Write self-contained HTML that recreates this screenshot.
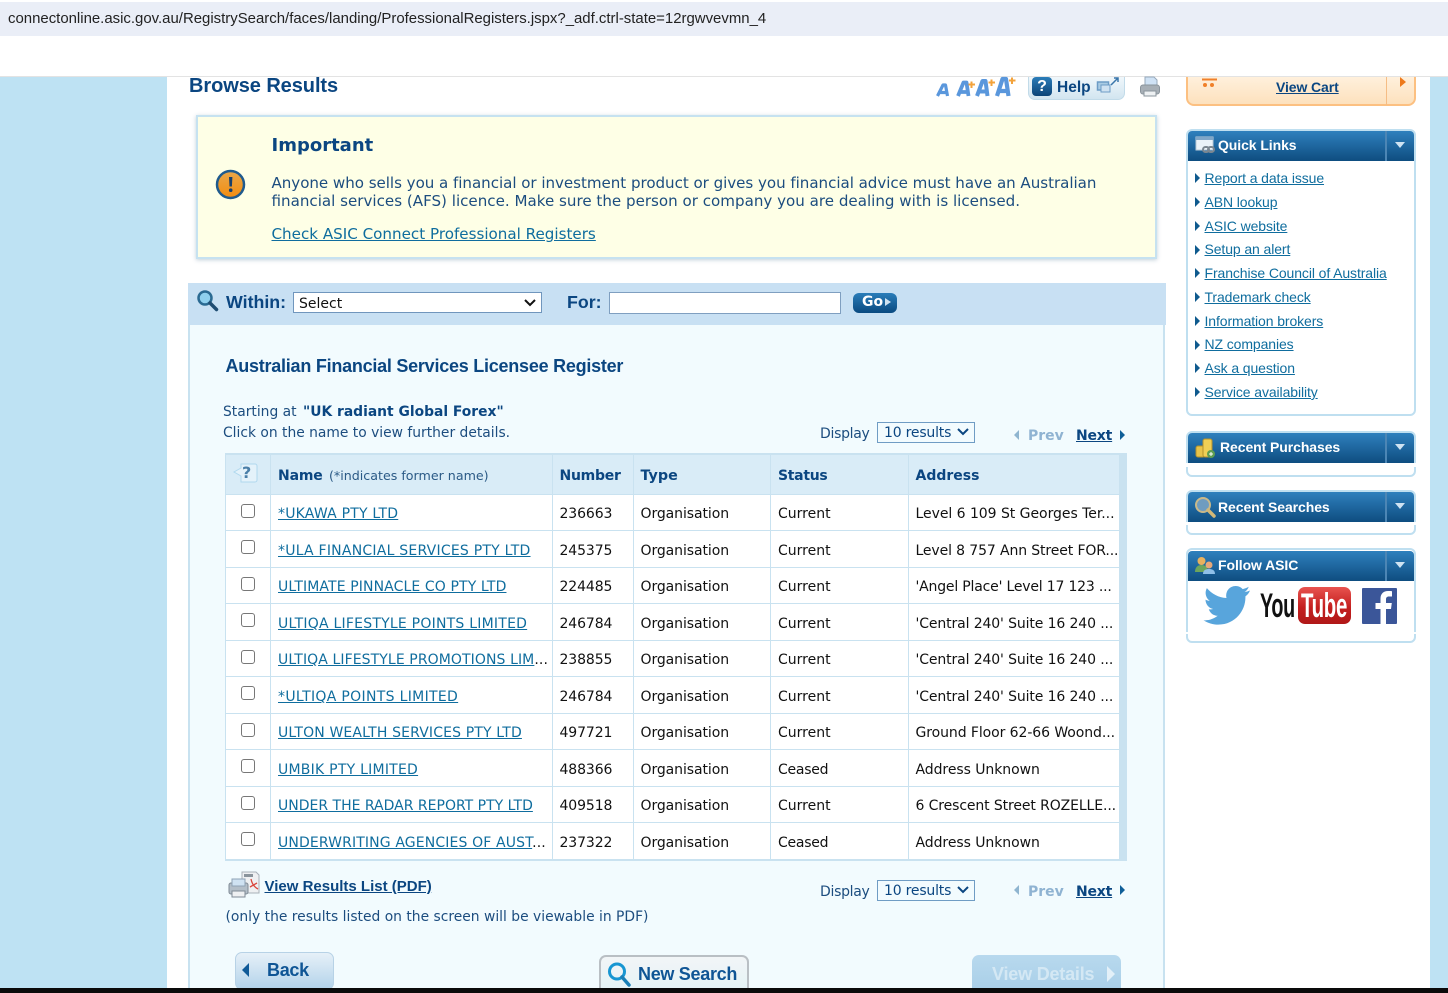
<!DOCTYPE html>
<html lang="en"><head><meta charset="utf-8"><title>Browse Results</title>
<style>
html,body{margin:0;padding:0;width:1448px;height:993px;overflow:hidden;background:#fff}
body{position:relative;font-family:"DejaVu Sans","Liberation Sans",sans-serif;font-size:14px;color:#111}
.a{position:absolute}
.t{position:absolute;white-space:nowrap;line-height:18px;height:18px}
.s{font-family:"Liberation Sans",Arial,sans-serif}
.n{color:#0b4681}
.b{font-weight:bold}
a{color:#0f6d9e;text-decoration:underline}
a.d{color:#0b4681}
.l{font-family:"Liberation Sans",Arial,sans-serif;font-size:14px;letter-spacing:-.1px}
.tri{position:absolute;width:0;height:0;border-style:solid;border-color:transparent}
.cb{position:absolute;left:241px;width:12px;height:12px;border:1.5px solid #777;border-radius:3px;background:#fff}
.hl{position:absolute;left:226px;width:893px;height:1px;background:#c9e2f0}
.vl{position:absolute;width:1px;top:455px;height:404px;background:#c9e2f0}
.head{position:absolute;left:1188px;width:226px;height:30px;background:linear-gradient(#2f80bd,#0e4d80);border-radius:4px 4px 0 0}
.box{position:absolute;left:1186px;width:226px;border:2px solid #bfdff0;border-radius:6px;background:#fff}
.sep{position:absolute;left:1385px;width:2px;height:30px;background:#4c86b5}
.ar{position:absolute;left:1395px;border-style:solid;border-color:#cfe3f2 transparent transparent;border-width:6px 5.5px 0;width:0;height:0}
.ht{position:absolute;white-space:nowrap;color:#fff;font:bold 14px/18px "Liberation Sans",sans-serif;letter-spacing:-.08px}
.sel{position:absolute;left:877px;width:96px;height:19px;border:1px solid #6f9cc4;background:#f2fbfe;color:#0b4681;line-height:21px}
.sel span{position:absolute;left:6px;top:0;letter-spacing:-.2px;white-space:nowrap}
.num{left:559.5px;letter-spacing:-.1px}
.org{left:640.5px;letter-spacing:-.08px}
.st{left:778px}
.ad{left:915.5px}
</style></head><body>
<div class="a" style="left:0;top:2px;width:1448px;height:34px;background:#eaeef7"></div>
<div class="t" style="left:8px;top:10px;font-family:'Liberation Sans',sans-serif;font-size:14.95px;color:#222">connectonline.asic.gov.au/RegistrySearch/faces/landing/ProfessionalRegisters.jspx?_adf.ctrl-state=12rgwvevmn_4</div>
<div class="a" style="left:0;top:77px;width:167px;height:911px;background:#bee2f3"></div>
<div class="a" style="left:1430px;top:77px;width:18px;height:911px;background:#bee2f3"></div>
<div class="a" style="left:0;top:76px;width:1448px;height:1px;background:#e3e3e3"></div>

<div class="t s b n" style="left:189px;top:76px;font-size:20px;line-height:20px;height:22px;letter-spacing:-.07px">Browse Results</div>

<svg class="a" style="left:934px;top:76px" width="84" height="22" viewBox="0 0 84 22">
<g fill="none" stroke="#5a97dc" stroke-linejoin="round">
<path d="M3.500 20 9 9h2.500L13.500 20M5 16.500h8" stroke-width="3.200"/>
<path d="M24 20 29.500 6.500H32.500L34.500 20M26 16H34" stroke-width="3.800"/>
<path d="M43 20 48.500 5H51.500L53.500 20M45 15.500H53" stroke-width="4"/>
<path d="M63 20 68.500 3H72L74.500 20M65 15H74" stroke-width="4.200"/></g>
<g stroke="#f3a33c" stroke-width="2" fill="none"><path d="M34.500 8.500h6.500M37.500 5.500v6.500M54.500 6.500h6.500M57.500 3.500v6.500M75 4.500h6.500M78 1.500v6.500"/></g></svg>

<div class="a" style="left:1028px;top:77px;width:95px;height:22px;background:linear-gradient(#f0f7fb,#d2e5f0);border:1px solid #c2dbe9;border-top:0;border-radius:0 0 7px 7px"></div>
<div class="a" style="left:1032px;top:77px;width:20px;height:19px;background:linear-gradient(#2b7db9,#0c4377);border-radius:4px;color:#fff;font:bold 16px/19px 'Liberation Sans',sans-serif;text-align:center">?</div>
<div class="t s b n" style="left:1057px;top:79px;font-size:15.500px">Help</div>
<svg class="a" style="left:1096px;top:76px" width="26" height="20" viewBox="0 0 26 20"><rect x="1.500" y="6" width="11" height="8" fill="#a9cbe3" stroke="#6d9cc6" stroke-width="1.500"/><rect x="5" y="9" width="9" height="7" fill="#cfe2f1" stroke="#6d9cc6"/><path d="M15 9l7-7M18 2h4v4" stroke="#3a76ab" stroke-width="1.500" fill="none"/></svg>
<svg class="a" style="left:1139px;top:76px" width="23" height="22" viewBox="0 0 23 22"><path d="M6 1h9l3 3v6H6z" fill="#cfe2f5" stroke="#97a9bb"/><rect x="1.500" y="9" width="19" height="9" rx="2.500" fill="#a7afb6" stroke="#8a949c"/><rect x="5" y="15" width="12" height="5" fill="#eef1f3" stroke="#8b959d"/></svg>

<div class="a" style="left:1186px;top:77px;width:226px;height:27px;background:linear-gradient(#fff0dc,#fde1bd);border:2px solid #fcc081;border-top:0;border-radius:0 0 8px 8px"></div>
<div class="a" style="left:1386px;top:77px;width:1px;height:28px;background:#f5bd85"></div>
<svg class="a" style="left:1200px;top:77px" width="20" height="12" viewBox="0 0 20 12"><path d="M2 2.500h15" stroke="#f0802a" stroke-width="2"/><circle cx="5" cy="8" r="2" fill="#f0802a"/><circle cx="12" cy="8" r="2" fill="#f0802a"/></svg>
<div class="t s b" style="left:1276px;top:78px;font-size:14px;letter-spacing:-.1px"><a class="d" href="#">View Cart</a></div>
<div class="tri" style="left:1400px;top:77px;border-width:5px 0 5px 6px;border-left-color:#ee7a1c"></div>

<div class="a" style="left:196px;top:115px;width:957px;height:140px;background:#feffe6;border:2px solid #c6e2f0;box-shadow:0 1px 4px rgba(120,150,170,.45)"></div>
<svg class="a" style="left:215px;top:169px" width="31" height="31" viewBox="0 0 31 31"><defs><linearGradient id="o" x1="0" y1="0" x2="0" y2="1"><stop offset="0" stop-color="#e9a84a"/><stop offset="1" stop-color="#f28c10"/></linearGradient></defs><circle cx="15.500" cy="15.500" r="13.500" fill="url(#o)" stroke="#1f5b8e" stroke-width="2.500"/><path d="M14 8h3.400l-.5 9.500h-2.400z" fill="#173f6b"/><circle cx="15.700" cy="21.200" r="1.800" fill="#173f6b"/></svg>
<div class="t b n" style="left:271.500px;top:136px;font-size:18px;line-height:20px;height:20px">Important</div>
<div class="t n" style="left:271.500px;top:174px;font-size:15.100px;color:#1c4d7f;letter-spacing:-.04px">Anyone who sells you a financial or investment product or gives you financial advice must have an Australian</div>
<div class="t n" style="left:271.500px;top:192px;font-size:15.100px;color:#1c4d7f">financial services (AFS) licence. Make sure the person or company you are dealing with is licensed.</div>
<div class="t" style="left:271.500px;top:225px;font-size:15.130px"><a href="#">Check ASIC Connect Professional Registers</a></div>

<div class="a" style="left:189px;top:325px;width:976px;height:663px;background:#f2fbfe"></div>
<div class="a" style="left:188px;top:325px;width:2px;height:663px;background:#c8e2f0"></div>
<div class="a" style="left:1163px;top:325px;width:2px;height:663px;background:#c8e2f0"></div>
<div class="a" style="left:188px;top:283px;width:978px;height:42px;background:#c8e0f3"></div>
<svg class="a" style="left:196px;top:289px" width="24" height="24" viewBox="0 0 24 24"><circle cx="9" cy="9" r="6.500" fill="#8fd0ee" stroke="#2a6a92" stroke-width="2.500"/><path d="M14 14l6.500 6.500" stroke="#1f4d72" stroke-width="3.500" stroke-linecap="round"/></svg>
<div class="t s b n" style="left:226px;top:292px;font-size:17.800px;line-height:20px;height:20px">Within:</div>
<div class="a" style="left:293px;top:292px;width:247px;height:19px;background:#fff;border:1px solid #7096bd"></div>
<div class="t" style="left:299px;top:295px;font-size:14px;color:#111">Select</div>
<svg class="a" style="left:523px;top:298px" width="14" height="10" viewBox="0 0 14 10"><path d="M2 2l5 5 5-5" stroke="#111" stroke-width="2" fill="none"/></svg>
<div class="t s b n" style="left:567px;top:292px;font-size:17.800px;line-height:20px;height:20px">For:</div>
<div class="a" style="left:609px;top:292px;width:230px;height:20px;background:#fff;border:1px solid #7f9fc0"></div>
<div class="a" style="left:853px;top:293px;width:44px;height:20px;background:linear-gradient(#2a7db9,#0a4a80);border-radius:6px"></div>
<div class="t" style="left:862px;top:293px;font:bold 14px/18px 'DejaVu Sans',sans-serif;color:#fff">Go</div>
<div class="tri" style="left:885px;top:298px;border-width:4.500px 0 4.500px 6px;border-left-color:#cfe3f2"></div>

<div class="t s b n" style="left:225.500px;top:356px;font-size:18px;line-height:20px;height:20px;letter-spacing:-.245px">Australian Financial Services Licensee Register</div>
<div class="t" style="left:223px;top:403px;color:#1c4d7f;font-size:13.850px">Starting at</div>
<div class="t b n" style="left:303px;top:403px;font-size:13.850px">"UK radiant Global Forex"</div>
<div class="t" style="left:223px;top:424px;color:#1c4d7f;font-size:13.850px">Click on the name to view further details.</div>

<div class="t" style="left:820px;top:425px;color:#1c4d7f;font-size:14px;letter-spacing:-.3px">Display</div>
<div class="sel" style="top:422px"><span>10 results</span></div>
<svg class="a" style="left:956px;top:427px" width="14" height="10" viewBox="0 0 14 10"><path d="M2 2l5 5 5-5" stroke="#0b4681" stroke-width="2" fill="none"/></svg>
<div class="tri" style="left:1014px;top:430px;border-width:5px 5px 5px 0;border-right-color:#8fb5d0"></div>
<div class="t b" style="left:1028px;top:427px;font-size:14px;color:#8fb3d2">Prev</div>
<div class="t b" style="left:1076px;top:427px;font-size:14px;letter-spacing:-.2px"><a class="d" href="#">Next</a></div>
<div class="tri" style="left:1120px;top:430px;border-width:5px 0 5px 5px;border-left-color:#0f5f98"></div>

<!-- table -->
<div class="a" style="left:225px;top:453px;width:902px;height:408px;background:#c9e2f0"></div>
<div class="a" style="left:226px;top:455px;width:893px;height:39px;background:#d9ecf7"></div>
<div class="a" style="left:226px;top:495px;width:893px;height:364px;background:#fff"></div>
<div class="vl" style="left:270px"></div><div class="vl" style="left:552px"></div><div class="vl" style="left:633px"></div><div class="vl" style="left:770px"></div><div class="vl" style="left:908px"></div>
<div class="hl" style="top:530px"></div><div class="hl" style="top:567px"></div><div class="hl" style="top:603px"></div><div class="hl" style="top:640px"></div><div class="hl" style="top:676px"></div><div class="hl" style="top:713px"></div><div class="hl" style="top:749px"></div><div class="hl" style="top:786px"></div><div class="hl" style="top:822px"></div>

<svg class="a" style="left:233px;top:462px" width="25" height="22" viewBox="0 0 25 22"><path d="M8 2h14a2 2 0 0 1 2 2v14a2 2 0 0 1-2 2H8v-6L1 10l7-4z" fill="#e4f2fa" stroke="#b0d8ee"/></svg>
<div class="t b" style="left:242px;top:464px;font-size:16px;color:#4a7fa8">?</div>
<div class="t b n" style="left:278px;top:467px;font-size:14px;letter-spacing:-.15px">Name</div>
<div class="t n" style="left:329px;top:467px;font-size:12.650px;color:#2b5a86">(*indicates former name)</div>
<div class="t b n" style="left:559.500px;top:467px;font-size:14px;letter-spacing:-.25px">Number</div>
<div class="t b n" style="left:640.500px;top:467px;font-size:14.300px">Type</div>
<div class="t b n" style="left:778px;top:467px;font-size:14px;letter-spacing:-.3px">Status</div>
<div class="t b n" style="left:915.500px;top:467px;font-size:14px">Address</div>

<div class="cb" style="top:504px"></div>
<div class="t" style="left:278px;top:505px;letter-spacing:.21px"><a href="#">*UKAWA PTY LTD</a></div><div class="t num" style="top:505px">236663</div><div class="t org" style="top:505px">Organisation</div><div class="t st" style="top:505px">Current</div><div class="t ad" style="top:505px;letter-spacing:-.04px">Level 6 109 St Georges Ter...</div>
<div class="cb" style="top:540px"></div>
<div class="t" style="left:278px;top:542px;letter-spacing:.23px"><a href="#">*ULA FINANCIAL SERVICES PTY LTD</a></div><div class="t num" style="top:542px">245375</div><div class="t org" style="top:542px">Organisation</div><div class="t st" style="top:542px">Current</div><div class="t ad" style="top:542px;letter-spacing:-.12px">Level 8 757 Ann Street FOR...</div>
<div class="cb" style="top:577px"></div>
<div class="t" style="left:278px;top:578px;letter-spacing:.11px"><a href="#">ULTIMATE PINNACLE CO PTY LTD</a></div><div class="t num" style="top:578px">224485</div><div class="t org" style="top:578px">Organisation</div><div class="t st" style="top:578px">Current</div><div class="t ad" style="top:578px;letter-spacing:-.19px">'Angel Place' Level 17 123 ...</div>
<div class="cb" style="top:613px"></div>
<div class="t" style="left:278px;top:615px;letter-spacing:.23px"><a href="#">ULTIQA LIFESTYLE POINTS LIMITED</a></div><div class="t num" style="top:615px">246784</div><div class="t org" style="top:615px">Organisation</div><div class="t st" style="top:615px">Current</div><div class="t ad" style="top:615px;letter-spacing:-.12px">'Central 240' Suite 16 240 ...</div>
<div class="cb" style="top:650px"></div>
<div class="t" style="left:278px;top:651px;letter-spacing:.09px"><a href="#">ULTIQA LIFESTYLE PROMOTIONS LIM</a>...</div><div class="t num" style="top:651px">238855</div><div class="t org" style="top:651px">Organisation</div><div class="t st" style="top:651px">Current</div><div class="t ad" style="top:651px;letter-spacing:-.12px">'Central 240' Suite 16 240 ...</div>
<div class="cb" style="top:686px"></div>
<div class="t" style="left:278px;top:688px;letter-spacing:.32px"><a href="#">*ULTIQA POINTS LIMITED</a></div><div class="t num" style="top:688px">246784</div><div class="t org" style="top:688px">Organisation</div><div class="t st" style="top:688px">Current</div><div class="t ad" style="top:688px;letter-spacing:-.12px">'Central 240' Suite 16 240 ...</div>
<div class="cb" style="top:723px"></div>
<div class="t" style="left:278px;top:724px;letter-spacing:.14px"><a href="#">ULTON WEALTH SERVICES PTY LTD</a></div><div class="t num" style="top:724px">497721</div><div class="t org" style="top:724px">Organisation</div><div class="t st" style="top:724px">Current</div><div class="t ad" style="top:724px;letter-spacing:-.08px">Ground Floor 62-66 Woond...</div>
<div class="cb" style="top:759px"></div>
<div class="t" style="left:278px;top:761px;letter-spacing:.24px"><a href="#">UMBIK PTY LIMITED</a></div><div class="t num" style="top:761px">488366</div><div class="t org" style="top:761px">Organisation</div><div class="t st" style="top:761px;letter-spacing:-.25px">Ceased</div><div class="t ad" style="top:761px;letter-spacing:-.06px">Address Unknown</div>
<div class="cb" style="top:796px"></div>
<div class="t" style="left:278px;top:797px"><a href="#">UNDER THE RADAR REPORT PTY LTD</a></div><div class="t num" style="top:797px">409518</div><div class="t org" style="top:797px">Organisation</div><div class="t st" style="top:797px">Current</div><div class="t ad" style="top:797px;letter-spacing:-.11px">6 Crescent Street ROZELLE...</div>
<div class="cb" style="top:832px"></div>
<div class="t" style="left:278px;top:834px;letter-spacing:.13px"><a href="#">UNDERWRITING AGENCIES OF AUST</a>...</div><div class="t num" style="top:834px">237322</div><div class="t org" style="top:834px">Organisation</div><div class="t st" style="top:834px;letter-spacing:-.25px">Ceased</div><div class="t ad" style="top:834px;letter-spacing:-.06px">Address Unknown</div>

<svg class="a" style="left:228px;top:871px" width="32" height="28" viewBox="0 0 32 28"><path d="M14 1h14l3 3v18H14z" fill="#eef0f2" stroke="#a8b0b8"/><rect x="16" y="3" width="9" height="3" fill="#8a949c"/><path d="M23 8c1 5 3 8 7 10M22 16l7-4" stroke="#d9473d" stroke-width="1.300" fill="none"/><rect x="1" y="12" width="19" height="11" rx="2" fill="#b3bec8" stroke="#7f8a95"/><rect x="4" y="8" width="13" height="7" fill="#cfe2f2" stroke="#8fa3b5"/><rect x="4" y="20" width="13" height="6" fill="#eef0f2" stroke="#7f8a95"/></svg>
<div class="t s b" style="left:264.500px;top:878px;font-size:15px"><a class="d" href="#">View Results List (PDF)</a></div>
<div class="t" style="left:225.500px;top:908px;font-size:13.870px;color:#1c4d7f">(only the results listed on the screen will be viewable in PDF)</div>

<div class="t" style="left:820px;top:883px;color:#1c4d7f;font-size:14px;letter-spacing:-.3px">Display</div>
<div class="sel" style="top:880px"><span>10 results</span></div>
<svg class="a" style="left:956px;top:885px" width="14" height="10" viewBox="0 0 14 10"><path d="M2 2l5 5 5-5" stroke="#0b4681" stroke-width="2" fill="none"/></svg>
<div class="tri" style="left:1014px;top:885px;border-width:5px 5px 5px 0;border-right-color:#8fb5d0"></div>
<div class="t b" style="left:1028px;top:883px;font-size:14px;color:#8fb3d2">Prev</div>
<div class="t b" style="left:1076px;top:883px;font-size:14px;letter-spacing:-.2px"><a class="d" href="#">Next</a></div>
<div class="tri" style="left:1120px;top:885px;border-width:5px 0 5px 5px;border-left-color:#0f5f98"></div>

<div class="a" style="left:235px;top:952px;width:99px;height:38px;background:linear-gradient(#e6f0f8,#b3d3ea);border:1px solid #b7d2e6;border-radius:7px;box-sizing:border-box"></div>
<div class="tri" style="left:242px;top:963px;border-width:7px 7px 7px 0;border-right-color:#0f5a98"></div>
<div class="t s b" style="left:267px;top:960px;font-size:18px;line-height:20px;height:20px;color:#0f5595;letter-spacing:-.3px">Back</div>
<div class="a" style="left:599px;top:955px;width:150px;height:36px;background:linear-gradient(#f2f5f7,#e4f3f6);border:2px solid #b9bfc4;border-bottom:0;border-radius:7px 7px 0 0;box-sizing:border-box"></div>
<svg class="a" style="left:606px;top:961px" width="26" height="26" viewBox="0 0 26 26"><circle cx="11" cy="10.500" r="7.500" fill="none" stroke="#1796d2" stroke-width="3"/><path d="M16 16l7 8" stroke="#1a7fb6" stroke-width="3.500" stroke-linecap="round"/></svg>
<div class="t s b" style="left:638px;top:964px;font-size:18px;line-height:20px;height:20px;color:#0f5595;letter-spacing:-.3px">New Search</div>
<div class="a" style="left:972px;top:955px;width:149px;height:36px;background:linear-gradient(#b8d9ee,#a9cfe8);border-radius:7px 7px 0 0"></div>
<div class="t s b" style="left:992px;top:964px;font-size:18px;line-height:20px;height:20px;color:#d4e8f4;letter-spacing:-.2px">View Details</div>
<div class="tri" style="left:1107px;top:966px;border-width:8px 0 8px 8px;border-left-color:#e3f0f8"></div>

<div class="a" style="left:0;top:988px;width:1448px;height:5px;background:#0a0a0a"></div>

<!-- sidebar -->
<div class="box" style="top:129px;height:283px"></div>
<div class="head" style="top:131px"></div><div class="sep" style="top:131px"></div><div class="ar" style="top:142px"></div>
<svg class="a" style="left:1195px;top:136px" width="22" height="18" viewBox="0 0 22 18"><rect x="1" y="1" width="17" height="13" fill="#eaf2f8" stroke="#b9c9d6"/><rect x="1" y="1" width="17" height="3" fill="#7fa6c8"/><rect x="8" y="11" width="6" height="5" rx="2.500" fill="none" stroke="#7b8791" stroke-width="2"/><rect x="13" y="11" width="6" height="5" rx="2.500" fill="none" stroke="#7b8791" stroke-width="2"/></svg>
<div class="ht" style="left:1218px;top:136px">Quick Links</div>

<div class="tri" style="left:1195px;top:173px;border-width:5px 0 5px 5px;border-left-color:#0f5a8e"></div><div class="t l" style="left:1204.500px;top:169px"><a href="#">Report a data issue</a></div>
<div class="tri" style="left:1195px;top:197px;border-width:5px 0 5px 5px;border-left-color:#0f5a8e"></div><div class="t l" style="left:1204.500px;top:193px"><a href="#">ABN lookup</a></div>
<div class="tri" style="left:1195px;top:221px;border-width:5px 0 5px 5px;border-left-color:#0f5a8e"></div><div class="t l" style="left:1204.500px;top:217px"><a href="#">ASIC website</a></div>
<div class="tri" style="left:1195px;top:245px;border-width:5px 0 5px 5px;border-left-color:#0f5a8e"></div><div class="t l" style="left:1204.500px;top:240px"><a href="#">Setup an alert</a></div>
<div class="tri" style="left:1195px;top:268px;border-width:5px 0 5px 5px;border-left-color:#0f5a8e"></div><div class="t l" style="left:1204.500px;top:264px"><a href="#">Franchise Council of Australia</a></div>
<div class="tri" style="left:1195px;top:292px;border-width:5px 0 5px 5px;border-left-color:#0f5a8e"></div><div class="t l" style="left:1204.500px;top:288px"><a href="#">Trademark check</a></div>
<div class="tri" style="left:1195px;top:316px;border-width:5px 0 5px 5px;border-left-color:#0f5a8e"></div><div class="t l" style="left:1204.500px;top:312px"><a href="#">Information brokers</a></div>
<div class="tri" style="left:1195px;top:340px;border-width:5px 0 5px 5px;border-left-color:#0f5a8e"></div><div class="t l" style="left:1204.500px;top:335px"><a href="#">NZ companies</a></div>
<div class="tri" style="left:1195px;top:363px;border-width:5px 0 5px 5px;border-left-color:#0f5a8e"></div><div class="t l" style="left:1204.500px;top:359px"><a href="#">Ask a question</a></div>
<div class="tri" style="left:1195px;top:387px;border-width:5px 0 5px 5px;border-left-color:#0f5a8e"></div><div class="t l" style="left:1204.500px;top:383px"><a href="#">Service availability</a></div>

<div class="box" style="top:431px;height:42px"></div>
<div class="head" style="top:433px"></div><div class="sep" style="top:433px"></div><div class="ar" style="top:444px"></div>
<div class="a" style="left:1184px;top:463px;width:234px;height:4px;background:#fff"></div>
<svg class="a" style="left:1194px;top:437px" width="22" height="22" viewBox="0 0 22 22"><rect x="2" y="9" width="9" height="11" rx="2" fill="#e8c34a" stroke="#b5902a"/><rect x="9" y="2" width="9" height="18" rx="2" fill="#f0cf55" stroke="#b5902a"/><circle cx="17" cy="17" r="4" fill="#5e9e52"/><path d="M15 17h4M17 15v4" stroke="#fff"/></svg>
<div class="ht" style="left:1220px;top:438px">Recent Purchases</div>

<div class="box" style="top:490px;height:41px"></div>
<div class="head" style="top:492px"></div><div class="sep" style="top:492px"></div><div class="ar" style="top:503px"></div>
<div class="a" style="left:1184px;top:522px;width:234px;height:3px;background:#fff"></div>
<svg class="a" style="left:1194px;top:496px" width="22" height="22" viewBox="0 0 22 22"><circle cx="9" cy="9" r="7" fill="#6f9cc0" stroke="#c9b98a" stroke-width="2"/><path d="M14 14l6 6" stroke="#d2b878" stroke-width="3.500" stroke-linecap="round"/></svg>
<div class="ht" style="left:1218px;top:498px">Recent Searches</div>

<div class="box" style="top:548px;height:91px"></div>
<div class="head" style="top:551px"></div><div class="sep" style="top:551px"></div><div class="ar" style="top:562px"></div>
<div class="a" style="left:1184px;top:632px;width:234px;height:2px;background:#fff"></div>
<svg class="a" style="left:1194px;top:556px" width="22" height="20" viewBox="0 0 22 20"><circle cx="7.500" cy="5" r="4" fill="#e8b15e"/><path d="M1 16c0-5 3-7 6.500-7S14 11 14 16z" fill="#6da55c"/><circle cx="15" cy="9" r="3.500" fill="#e8a878"/><path d="M9 18c0-4 3-5 6-5s6 1 6 5z" fill="#8fc0e8"/></svg>
<div class="ht" style="left:1218px;top:556px">Follow ASIC</div>

<svg class="a" style="left:1203px;top:585px" width="48" height="41" viewBox="0 0 48 41"><path d="M47 5.500c-1.700.8-3.500 1.300-5.400 1.500 2-1.200 3.400-3 4.100-5.200-1.800 1.100-3.800 1.900-6 2.300A9.500 9.500 0 0 0 23.500 13C15.600 12.600 8.600 8.800 3.900 3.100 1.400 7.400 2.700 13 6.800 15.800c-1.500 0-3-.5-4.300-1.200 0 4.600 3.300 8.500 7.600 9.400-1.400.4-2.900.4-4.300.2 1.200 3.800 4.700 6.500 8.900 6.600C10.600 34 5.400 35.800.5 35.200 4.800 38 9.900 39.600 15.300 39.600c17.600 0 27.700-14.900 27.100-28.200 1.900-1.400 3.500-3.100 4.600-5.900z" fill="#58a5dc"/></svg>
<div class="a" style="left:1298px;top:587px;width:53px;height:37px;background:linear-gradient(#e8534f,#c41f1f 55%,#b01818);border-radius:7px"></div>
<div class="t s b" style="left:1260px;top:588px;height:36px;line-height:36px;font-size:34px;color:#111;transform:scaleX(.58);transform-origin:0 50%;letter-spacing:-.5px">You</div>
<div class="t s b" style="left:1301px;top:588px;height:36px;line-height:36px;font-size:34px;color:#fff;transform:scaleX(.6);transform-origin:0 50%;letter-spacing:-.5px">Tube</div>
<div class="a" style="left:1362px;top:588px;width:35px;height:36px;background:#3b5699;border-radius:1px;overflow:hidden"></div>
<svg class="a" style="left:1362px;top:588px" width="35" height="36" viewBox="0 0 35 36"><path d="M24 36V21h5l.8-6H24v-3.500c0-1.800.6-3 3-3h3V3.200C29.400 3.100 27.800 3 26 3c-4.500 0-7.500 2.700-7.500 7.700V15h-5v6h5v15z" fill="#fff"/></svg>
</body></html>
